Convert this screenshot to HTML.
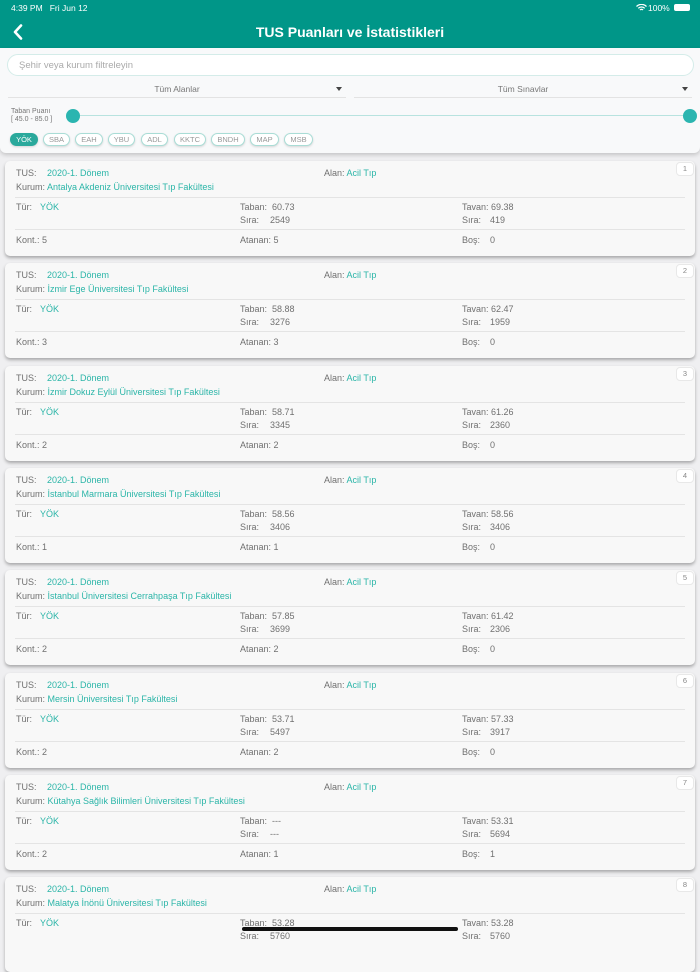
<!DOCTYPE html>
<html><head><meta charset="utf-8">
<style>
*{margin:0;padding:0;box-sizing:border-box}
body{width:700px;height:934px;overflow:hidden;background:#efeff1;font-family:"Liberation Sans",sans-serif;color:#666;position:relative;font-size:8.5px}
.hdr{position:absolute;left:0;top:0;width:700px;height:48px;background:#009688;color:#fff}
.st{position:absolute;top:3px;font-size:8.5px;color:#fff}
.title{position:absolute;top:24px;left:0;width:700px;text-align:center;font-size:14px;font-weight:bold}
.panel{position:absolute;left:0;top:48px;width:700px;height:105px;background:#f8f9fa;box-shadow:0 2px 4px rgba(0,0,0,.18);border-radius:0 0 6px 6px}
.search{position:absolute;left:7px;top:6px;width:687px;height:22px;border:1px solid #d4ece9;border-radius:11px;background:#fff;font-size:9.5px;color:#aaa;padding:5px 11px}
.dd{position:absolute;top:36px;height:14px;border-bottom:1px solid #e3e3e3;font-size:8.5px;color:#777;text-align:center}
.dd i{position:absolute;right:4px;top:3px;border:3.5px solid transparent;border-top:4px solid #444}
.a{position:absolute}
.chip{position:absolute;top:85px;height:13px;border:1.2px solid #a9ddd6;border-radius:7px;font-size:7.5px;color:#999;text-align:center;line-height:11px;background:#fff;box-shadow:0 1px 2px rgba(0,0,0,.15)}
.card{position:absolute;left:5px;width:690px;height:95px;background:#f8f8f8;border-radius:5px;box-shadow:0 2px 3px rgba(0,0,0,.3)}
.card span{position:absolute;white-space:nowrap;font-size:9px;color:#707070}
.card span.t,.card b.t{color:#2bb5a8}
.hr{position:absolute;left:10px;right:10px;height:1px;background:#e4e4e4}
.n{position:absolute;right:1px;top:1px;width:18px;height:14px;border:1px solid #e8e8e8;border-radius:4px;background:#fff;font-size:7.5px;color:#888;text-align:center;line-height:12px}
</style></head><body>
<div class="hdr">
<div class="st" style="left:11px">4:39 PM&nbsp;&nbsp; Fri Jun 12</div>
<div class="st" style="left:648px">100%</div>
<svg class="a" style="left:636px;top:4px" width="11" height="8" viewBox="0 0 11 8"><path d="M0.5 2.5A7 7 0 0 1 10.5 2.5M2.3 4.3A4.5 4.5 0 0 1 8.7 4.3M4 6A2 2 0 0 1 7 6" stroke="#fff" stroke-width="1.3" fill="none"/></svg>
<div class="a" style="left:674px;top:4px;width:16px;height:7px;background:#fff;border-radius:2px"></div>
<svg class="a" style="left:13px;top:24px" width="10" height="16" viewBox="0 0 10 16"><path d="M8 1.5L2 8l6 6.5" stroke="#fff" stroke-width="2.6" fill="none" stroke-linecap="round" stroke-linejoin="round"/></svg>
<div class="title">TUS Puanları ve İstatistikleri</div>
</div>
<div class="panel">
<div class="search">Şehir veya kurum filtreleyin</div>
<div class="dd" style="left:8px;width:338px">Tüm Alanlar<i></i></div>
<div class="dd" style="left:354px;width:338px">Tüm Sınavlar<i></i></div>
<div class="a" style="left:11px;top:60px;font-size:7px;color:#777;line-height:8px">Taban Puanı<br>[ 45.0 - 85.0 ]</div>
<div class="a" style="left:73px;top:67px;width:617px;height:1px;background:#b8e3df"></div>
<div class="a" style="left:66px;top:61px;width:14px;height:14px;border-radius:7px;background:#2bb5b0"></div>
<div class="a" style="left:683px;top:61px;width:14px;height:14px;border-radius:7px;background:#2bb5b0"></div>
<div class="chip" style="left:10px;width:28px;background:#2aa99c;color:#fff;border-color:#2aa99c">YÖK</div>
<div class="chip" style="left:43px;width:27px">SBA</div>
<div class="chip" style="left:75px;width:28px">EAH</div>
<div class="chip" style="left:108px;width:27px">YBU</div>
<div class="chip" style="left:141px;width:27px">ADL</div>
<div class="chip" style="left:174px;width:32px">KKTC</div>
<div class="chip" style="left:211px;width:34px">BNDH</div>
<div class="chip" style="left:250px;width:29px">MAP</div>
<div class="chip" style="left:284px;width:29px">MSB</div>
</div>

<div class="card" style="top:161px"><div class="n">1</div>
<span style="left:11px;top:7px">TUS:</span><span class="t" style="left:42px;top:7px">2020-1. Dönem</span><span style="left:319px;top:7px">Alan: <b class="t" style="font-weight:normal">Acil Tıp</b></span>
<span style="left:11px;top:21px">Kurum: <b class="t" style="font-weight:normal">Antalya Akdeniz Üniversitesi Tıp Fakültesi</b></span>
<div class="hr" style="top:36px"></div>
<span style="left:11px;top:41px">Tür:</span><span class="t" style="left:35px;top:41px">YÖK</span>
<span style="left:235px;top:41px">Taban:&nbsp; 60.73</span><span style="left:235px;top:54px">Sıra:</span><span style="left:265px;top:54px">2549</span>
<span style="left:457px;top:41px">Tavan: 69.38</span><span style="left:457px;top:54px">Sıra:</span><span style="left:485px;top:54px">419</span>
<div class="hr" style="top:68px"></div>
<span style="left:11px;top:74px">Kont.: 5</span><span style="left:235px;top:74px">Atanan: 5</span><span style="left:457px;top:74px">Boş:</span><span style="left:485px;top:74px">0</span>
</div>

<div class="card" style="top:263px"><div class="n">2</div>
<span style="left:11px;top:7px">TUS:</span><span class="t" style="left:42px;top:7px">2020-1. Dönem</span><span style="left:319px;top:7px">Alan: <b class="t" style="font-weight:normal">Acil Tıp</b></span>
<span style="left:11px;top:21px">Kurum: <b class="t" style="font-weight:normal">İzmir Ege Üniversitesi Tıp Fakültesi</b></span>
<div class="hr" style="top:36px"></div>
<span style="left:11px;top:41px">Tür:</span><span class="t" style="left:35px;top:41px">YÖK</span>
<span style="left:235px;top:41px">Taban:&nbsp; 58.88</span><span style="left:235px;top:54px">Sıra:</span><span style="left:265px;top:54px">3276</span>
<span style="left:457px;top:41px">Tavan: 62.47</span><span style="left:457px;top:54px">Sıra:</span><span style="left:485px;top:54px">1959</span>
<div class="hr" style="top:68px"></div>
<span style="left:11px;top:74px">Kont.: 3</span><span style="left:235px;top:74px">Atanan: 3</span><span style="left:457px;top:74px">Boş:</span><span style="left:485px;top:74px">0</span>
</div>

<div class="card" style="top:366px"><div class="n">3</div>
<span style="left:11px;top:7px">TUS:</span><span class="t" style="left:42px;top:7px">2020-1. Dönem</span><span style="left:319px;top:7px">Alan: <b class="t" style="font-weight:normal">Acil Tıp</b></span>
<span style="left:11px;top:21px">Kurum: <b class="t" style="font-weight:normal">İzmir Dokuz Eylül Üniversitesi Tıp Fakültesi</b></span>
<div class="hr" style="top:36px"></div>
<span style="left:11px;top:41px">Tür:</span><span class="t" style="left:35px;top:41px">YÖK</span>
<span style="left:235px;top:41px">Taban:&nbsp; 58.71</span><span style="left:235px;top:54px">Sıra:</span><span style="left:265px;top:54px">3345</span>
<span style="left:457px;top:41px">Tavan: 61.26</span><span style="left:457px;top:54px">Sıra:</span><span style="left:485px;top:54px">2360</span>
<div class="hr" style="top:68px"></div>
<span style="left:11px;top:74px">Kont.: 2</span><span style="left:235px;top:74px">Atanan: 2</span><span style="left:457px;top:74px">Boş:</span><span style="left:485px;top:74px">0</span>
</div>

<div class="card" style="top:468px"><div class="n">4</div>
<span style="left:11px;top:7px">TUS:</span><span class="t" style="left:42px;top:7px">2020-1. Dönem</span><span style="left:319px;top:7px">Alan: <b class="t" style="font-weight:normal">Acil Tıp</b></span>
<span style="left:11px;top:21px">Kurum: <b class="t" style="font-weight:normal">İstanbul Marmara Üniversitesi Tıp Fakültesi</b></span>
<div class="hr" style="top:36px"></div>
<span style="left:11px;top:41px">Tür:</span><span class="t" style="left:35px;top:41px">YÖK</span>
<span style="left:235px;top:41px">Taban:&nbsp; 58.56</span><span style="left:235px;top:54px">Sıra:</span><span style="left:265px;top:54px">3406</span>
<span style="left:457px;top:41px">Tavan: 58.56</span><span style="left:457px;top:54px">Sıra:</span><span style="left:485px;top:54px">3406</span>
<div class="hr" style="top:68px"></div>
<span style="left:11px;top:74px">Kont.: 1</span><span style="left:235px;top:74px">Atanan: 1</span><span style="left:457px;top:74px">Boş:</span><span style="left:485px;top:74px">0</span>
</div>

<div class="card" style="top:570px"><div class="n">5</div>
<span style="left:11px;top:7px">TUS:</span><span class="t" style="left:42px;top:7px">2020-1. Dönem</span><span style="left:319px;top:7px">Alan: <b class="t" style="font-weight:normal">Acil Tıp</b></span>
<span style="left:11px;top:21px">Kurum: <b class="t" style="font-weight:normal">İstanbul Üniversitesi Cerrahpaşa Tıp Fakültesi</b></span>
<div class="hr" style="top:36px"></div>
<span style="left:11px;top:41px">Tür:</span><span class="t" style="left:35px;top:41px">YÖK</span>
<span style="left:235px;top:41px">Taban:&nbsp; 57.85</span><span style="left:235px;top:54px">Sıra:</span><span style="left:265px;top:54px">3699</span>
<span style="left:457px;top:41px">Tavan: 61.42</span><span style="left:457px;top:54px">Sıra:</span><span style="left:485px;top:54px">2306</span>
<div class="hr" style="top:68px"></div>
<span style="left:11px;top:74px">Kont.: 2</span><span style="left:235px;top:74px">Atanan: 2</span><span style="left:457px;top:74px">Boş:</span><span style="left:485px;top:74px">0</span>
</div>

<div class="card" style="top:673px"><div class="n">6</div>
<span style="left:11px;top:7px">TUS:</span><span class="t" style="left:42px;top:7px">2020-1. Dönem</span><span style="left:319px;top:7px">Alan: <b class="t" style="font-weight:normal">Acil Tıp</b></span>
<span style="left:11px;top:21px">Kurum: <b class="t" style="font-weight:normal">Mersin Üniversitesi Tıp Fakültesi</b></span>
<div class="hr" style="top:36px"></div>
<span style="left:11px;top:41px">Tür:</span><span class="t" style="left:35px;top:41px">YÖK</span>
<span style="left:235px;top:41px">Taban:&nbsp; 53.71</span><span style="left:235px;top:54px">Sıra:</span><span style="left:265px;top:54px">5497</span>
<span style="left:457px;top:41px">Tavan: 57.33</span><span style="left:457px;top:54px">Sıra:</span><span style="left:485px;top:54px">3917</span>
<div class="hr" style="top:68px"></div>
<span style="left:11px;top:74px">Kont.: 2</span><span style="left:235px;top:74px">Atanan: 2</span><span style="left:457px;top:74px">Boş:</span><span style="left:485px;top:74px">0</span>
</div>

<div class="card" style="top:775px"><div class="n">7</div>
<span style="left:11px;top:7px">TUS:</span><span class="t" style="left:42px;top:7px">2020-1. Dönem</span><span style="left:319px;top:7px">Alan: <b class="t" style="font-weight:normal">Acil Tıp</b></span>
<span style="left:11px;top:21px">Kurum: <b class="t" style="font-weight:normal">Kütahya Sağlık Bilimleri Üniversitesi Tıp Fakültesi</b></span>
<div class="hr" style="top:36px"></div>
<span style="left:11px;top:41px">Tür:</span><span class="t" style="left:35px;top:41px">YÖK</span>
<span style="left:235px;top:41px">Taban:&nbsp; ---</span><span style="left:235px;top:54px">Sıra:</span><span style="left:265px;top:54px">---</span>
<span style="left:457px;top:41px">Tavan: 53.31</span><span style="left:457px;top:54px">Sıra:</span><span style="left:485px;top:54px">5694</span>
<div class="hr" style="top:68px"></div>
<span style="left:11px;top:74px">Kont.: 2</span><span style="left:235px;top:74px">Atanan: 1</span><span style="left:457px;top:74px">Boş:</span><span style="left:485px;top:74px">1</span>
</div>

<div class="card" style="top:877px"><div class="n">8</div>
<span style="left:11px;top:7px">TUS:</span><span class="t" style="left:42px;top:7px">2020-1. Dönem</span><span style="left:319px;top:7px">Alan: <b class="t" style="font-weight:normal">Acil Tıp</b></span>
<span style="left:11px;top:21px">Kurum: <b class="t" style="font-weight:normal">Malatya İnönü Üniversitesi Tıp Fakültesi</b></span>
<div class="hr" style="top:36px"></div>
<span style="left:11px;top:41px">Tür:</span><span class="t" style="left:35px;top:41px">YÖK</span>
<span style="left:235px;top:41px">Taban:&nbsp; 53.28</span><span style="left:235px;top:54px">Sıra:</span><span style="left:265px;top:54px">5760</span>
<span style="left:457px;top:41px">Tavan: 53.28</span><span style="left:457px;top:54px">Sıra:</span><span style="left:485px;top:54px">5760</span>
</div>

<div class="a" style="left:242px;top:927px;width:216px;height:4px;border-radius:2px;background:#111"></div>
</body></html>
